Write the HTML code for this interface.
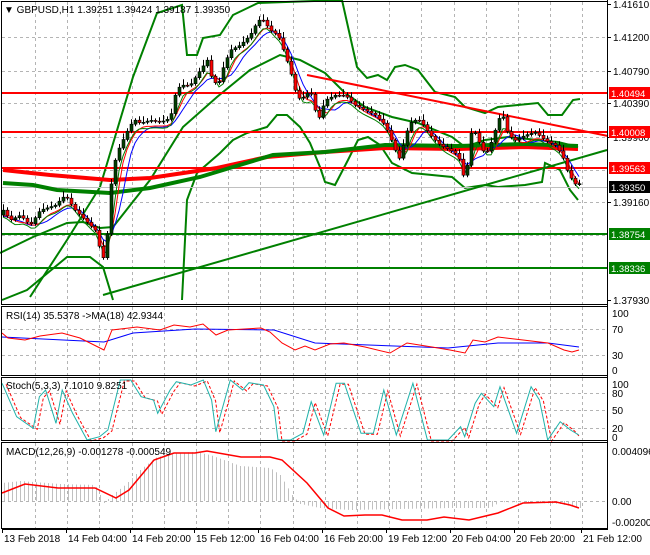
<!DOCTYPE html>
<html><head><meta charset="utf-8"><style>
html,body{margin:0;padding:0;background:#fff;}
body{width:650px;height:550px;overflow:hidden;font-family:"Liberation Sans",sans-serif;}
svg text{font-family:"Liberation Sans",sans-serif;font-size:10px;fill:#000;}
svg text.b{font-size:9.5px;fill:#fff;}
</style></head><body>
<svg id="s" width="650" height="550" xmlns="http://www.w3.org/2000/svg">
<rect x="0" y="0" width="650" height="550" fill="#fff"/>
<g id="grid" stroke="#b4b4b4" stroke-dasharray="3,3" stroke-width="1"></g>
<g id="main"></g>
<g fill="none" stroke="#000" stroke-width="1">
<rect x="1.5" y="1.5" width="606" height="303"/>
<rect x="1.5" y="306.5" width="606" height="69"/>
<rect x="1.5" y="377.5" width="606" height="63"/>
<rect x="1.5" y="442.5" width="606" height="86"/>
</g>
<text x="4" y="13">▼ GBPUSD,H1  1.39251 1.39424 1.39187 1.39350</text>
<text x="6" y="319">RSI(14) 35.5378  -&gt;MA(18) 42.9344</text>
<text x="6" y="389">Stoch(5,3,3) 7.1010 9.8251</text>
<text x="6" y="455">MACD(12,26,9) -0.001278 -0.000549</text>
<g id="axis"></g>
</svg>
<script>
var NS="http://www.w3.org/2000/svg",S=document.getElementById('s');
function el(p,t,a){var e=document.createElementNS(NS,t);for(var k in a)e.setAttribute(k,a[k]);(p||S).appendChild(e);return e;}
var G=document.getElementById('grid'),M=document.getElementById('main'),A=document.getElementById('axis');
function pl(pts,c,w,g,extra){var a={points:pts.map(function(p){return p[0]+','+p[1]}).join(' '),fill:'none',stroke:c,'stroke-width':w};if(extra)for(var k in extra)a[k]=extra[k];return el(g||M,'polyline',a);}
function interp(pts,x){for(var i=0;i<pts.length-1;i++){if(x>=pts[i][0]&&x<=pts[i+1][0]){var t=(x-pts[i][0])/(pts[i+1][0]-pts[i][0]);return pts[i][1]+t*(pts[i+1][1]-pts[i][1]);}}return x<pts[0][0]?pts[0][1]:pts[pts.length-1][1];}
for(var gx=35;gx<600;gx+=32.2){var xx=Math.round(gx)+0.5;[[2,305],[307,376],[378,441],[443,529]].forEach(function(r){el(G,'line',{x1:xx,y1:r[0],x2:xx,y2:r[1]});});}
[37,71,103,137,170,202,235,268].forEach(function(y){el(G,'line',{x1:2,y1:y+.5,x2:607,y2:y+.5});});
[329,355].forEach(function(y){el(G,'line',{x1:2,y1:y+.5,x2:607,y2:y+.5});});
[393,410,428].forEach(function(y){el(G,'line',{x1:2,y1:y+.5,x2:607,y2:y+.5});});
el(G,'line',{x1:2,y1:501.5,x2:607,y2:501.5});
var P=[[3,215],[10,225],[20,220],[30,230],[40,215],[55,210],[65,200],[75,215],[85,225],[95,235],[100,255],[104,265],[108,230],[112,175],[118,155],[125,140],[130,130],[135,125],[140,128],[150,125],[160,127],[170,123],[175,100],[180,90],[190,90],[200,75],[207,65],[212,85],[218,90],[222,75],[230,55],[240,50],[250,40],[258,25],[263,25],[270,35],[278,40],[285,60],[290,75],[295,95],[300,105],[305,100],[310,95],[315,115],[318,125],[325,105],[335,100],[345,100],[355,110],[365,115],[375,120],[385,130],[395,155],[400,165],[405,140],[412,125],[420,125],[430,140],[440,150],[450,155],[458,160],[463,180],[467,170],[472,130],[478,145],[485,160],[492,145],[498,125],[502,118],[508,140],[515,145],[525,140],[535,137],[545,145],[555,150],[562,160],[567,175],[572,185],[576,190],[580,188]];
pl([[30,297],[67,240],[100,187],[133,77],[157,13],[182,5],[187,55],[197,55],[203,38],[220,35],[233,15],[258,3],[342,0],[357,67],[367,78],[378,75],[387,80],[395,67],[405,65],[418,70],[435,92],[455,97],[465,107],[485,113],[498,107],[518,105],[538,103],[548,115],[562,115],[573,100],[580,99]],'#008000',2);
pl([[2,300],[27,290],[67,257],[90,257],[103,267],[113,300]],'#008000',2);
pl([[182,300],[187,200],[197,173],[220,153],[233,140],[247,133],[267,127],[277,115],[287,115],[300,127],[310,143],[320,167],[325,182],[335,185],[348,160],[358,140],[368,137],[380,145],[392,163],[412,173],[452,177],[465,188],[485,185],[498,187],[525,185],[542,182],[545,163],[560,170],[570,190],[578,200]],'#008000',2);
pl([[0,253],[33,237],[67,223],[83,222],[100,228],[113,227],[150,180],[183,127],[217,97],[250,70],[280,55],[300,60],[325,73],[345,93],[365,107],[392,117],[418,123],[452,137],[465,147],[485,140],[508,137],[558,142],[578,147]],'#008000',2);
[[93,'#ff0000',2],[132,'#ff0000',2],[168,'#ff0000',2],[234,'#008000',2],[268,'#008000',2]].forEach(function(h){el(M,'line',{x1:2,y1:h[0],x2:607,y2:h[0],stroke:h[1],'stroke-width':h[2]});});
el(M,'line',{x1:2,y1:187.5,x2:607,y2:187.5,stroke:'#c0c0c0','stroke-width':1});
pl([[3,170],[50,175],[110,180],[150,178],[217,168],[267,157],[325,152],[385,148],[458,149],[525,147],[578,149]],'#ff0000',4);
pl([[3,183],[33,185],[57,190],[110,193],[150,188],[200,177],[233,167],[273,155],[325,152],[385,145],[458,146],[525,144],[578,146]],'#008000',4);
el(M,'line',{x1:307,y1:75,x2:608,y2:136,stroke:'#ff0000','stroke-width':2});
el(M,'line',{x1:103,y1:295,x2:607,y2:150,stroke:'#008000','stroke-width':2});
function sm(off,lag){var r=[];for(var x=3;x<=580;x+=4){var v=0,n=0;for(var k=0;k<lag;k++){v+=interp(P,x-k*4);n++;}r.push([x,v/n+off]);}return r;}
pl(sm(1,6),'#0000ff',1);pl(sm(0,4),'#ff0000',1);pl(sm(2,3),'#008000',1);
var prev=interp(P,1);
for(var cx=3;cx<=580;cx+=4){var c=interp(P,cx)+((cx*7)%7-3)*1.6;var o=prev;var hi=Math.min(o,c)-2-((cx*3)%5),lo=Math.max(o,c)+2+((cx*5)%5);
el(M,'line',{x1:cx+.5,y1:hi,x2:cx+.5,y2:lo,stroke:'#000','stroke-width':1});
var bull=c<o;var bt=Math.min(o,c),bh=Math.max(1,Math.abs(o-c));
el(M,'rect',{x:cx-1,y:bt,width:3,height:bh,fill:bull?'#004000':'#ff0000',stroke:'#000','stroke-width':0.6});prev=c;}
pl([[2,337],[104,342],[133,333],[195,329],[274,330],[315,343],[448,348],[498,343],[548,343],[579,347]],'#0000ff',1);
pl([[2,333],[8,338],[25,340],[40,336],[62,333],[80,338],[104,350],[108,340],[112,330],[137,327],[160,330],[174,325],[190,327],[203,324],[216,335],[228,330],[261,328],[270,332],[282,343],[295,350],[305,346],[315,350],[330,344],[344,343],[365,347],[390,353],[407,343],[432,347],[450,350],[465,353],[473,340],[485,342],[498,337],[523,340],[548,343],[564,350],[572,352],[579,350]],'#ff0000',1);
var st=[[5,250],[40,350],[80,385],[95,290],[110,270],[135,370],[150,270],[175,340],[210,420],[240,410],[260,390],[290,240],[315,240],[340,290],[370,300],[380,340],[410,270],[425,245],[460,255],[490,240],[510,300],[520,395],[555,240],[585,270],[600,248],[635,255],[660,320],[670,420],[700,420],[730,400],[750,305],[780,405],[810,250],[830,250],[870,400],[900,400],[925,270],[955,405],[995,250],[1030,420],[1080,420],[1110,380],[1120,410],[1145,310],[1160,280],[1190,320],[1205,260],[1245,400],[1280,260],[1300,300],[1320,420],[1350,365],[1375,390],[1395,405]].map(function(p){return [+(p[0]/2.41).toFixed(1),+(p[1]/3+300).toFixed(1)]});
pl(st.map(function(p){return [Math.min(579,p[0]+4),p[1]+1]}),'#ff0000',1,null,{'stroke-dasharray':'3,2'});
pl(st,'#20b2aa',1);
var H=[[2,483],[20,481],[60,484],[95,485],[104,503],[112,495],[125,485],[140,470],[155,458],[170,453],[195,452],[210,455],[240,466],[270,468],[280,475],[292,495],[300,504],[320,508],[350,510],[400,509],[450,508],[490,508],[500,502],[540,503],[560,504],[579,508]];
for(var hx=4;hx<=580;hx+=4){var v=interp(H,hx);el(M,'line',{x1:hx+.5,y1:501,x2:hx+.5,y2:v,stroke:'#c0c0c0','stroke-width':1});}
pl([[2,493],[25,484],[58,488],[95,488],[116,498],[129,490],[154,460],[174,453],[195,453],[207,451],[241,457],[270,457],[282,460],[307,483],[328,508],[344,516],[365,515],[382,515],[402,520],[427,520],[444,517],[469,520],[498,513],[523,503],[556,502],[570,505],[579,508]],'#ff0000',1.5);
el(A,'line',{x1:607.5,y1:0,x2:607.5,y2:529,stroke:'#000'});
el(A,'line',{x1:2,y1:529.5,x2:608,y2:529.5,stroke:'#000'});
[[4,'1.41610'],[37,'1.41200'],[71,'1.40790'],[103,'1.40390'],[137,'1.39960'],[202,'1.39160'],[300,'1.37930']].forEach(function(l){el(A,'line',{x1:607,y1:l[0]+.5,x2:611,y2:l[0]+.5,stroke:'#000'});var t=el(A,'text',{x:613,y:l[0]+4});t.textContent=l[1];});
[[93,'1.40494','#ff0000'],[132,'1.40008','#ff0000'],[168,'1.39563','#ff0000'],[187,'1.39350','#000'],[234,'1.38754','#008000'],[268,'1.38336','#008000']].forEach(function(l){el(A,'rect',{x:609,y:l[0]-6,width:41,height:12,fill:l[2]});var t=el(A,'text',{x:611,y:l[0]+4,'class':'b'});t.textContent=l[1];});
[[313,'100'],[329,'70'],[355,'30'],[370,'0'],[384,'100'],[393,'80'],[410,'50'],[428,'20'],[437,'0'],[451,'0.004096'],[501,'0.00'],[522,'-0.002002']].forEach(function(l){var t=el(A,'text',{x:612,y:l[0]+4});t.textContent=l[1];});
var tl=[[2,'13 Feb 2018'],[66,'14 Feb 04:00'],[130,'14 Feb 20:00'],[194,'15 Feb 12:00'],[258,'16 Feb 04:00'],[322,'16 Feb 20:00'],[386,'19 Feb 12:00'],[450,'20 Feb 04:00'],[514,'20 Feb 20:00'],[581,'21 Feb 12:00']];
tl.forEach(function(l){el(A,'line',{x1:l[0]+.5,y1:529,x2:l[0]+.5,y2:533,stroke:'#000'});var t=el(A,'text',{x:l[0]+2,y:542});t.textContent=l[1];});
</script>
</body></html>
